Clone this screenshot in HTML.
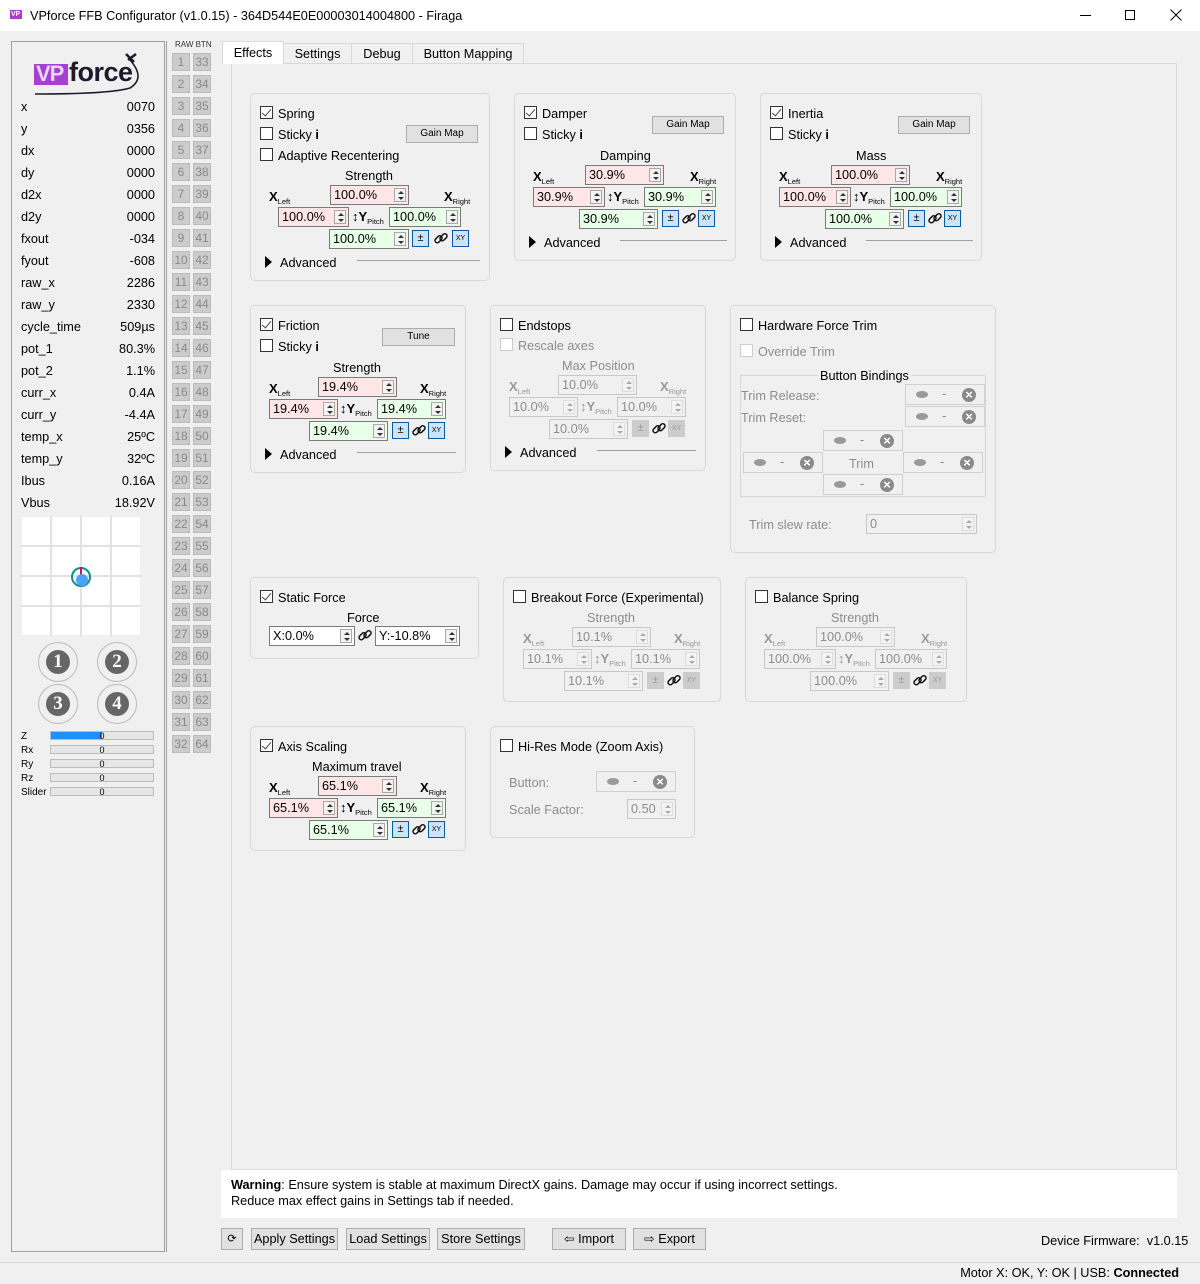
<!DOCTYPE html>
<html><head><meta charset="utf-8">
<style>
*{box-sizing:border-box;margin:0;padding:0}
body{width:1200px;height:1284px;background:#f0f0f0;font-family:"Liberation Sans",sans-serif;font-size:12.7px;color:#000;position:relative;overflow:hidden}
.a{position:absolute;white-space:nowrap}
.grp{position:absolute;border:1px solid #d8d8d8;border-radius:5px}
.cb{position:absolute;width:13px;height:13px;border:1px solid #333;background:#fff}
.cb.on::after{content:"";position:absolute;left:3px;top:0px;width:4px;height:8px;border:solid #444;border-width:0 1.5px 1.5px 0;transform:rotate(40deg)}
.cb.d{border-color:#ccc}
.t{position:absolute;white-space:nowrap;line-height:14px;margin-top:1px}
.dim{color:#8d8d8d}
.sp{position:absolute;height:20px;border:1px solid #7a7a7a;background:#fff;padding:2px 0 0 3px;font-size:12.7px;line-height:15px}
.pk{background:#ffe6e6}.gr{background:#e8ffe8}
.sp i{position:absolute;right:2px;top:2px;width:12px;height:14px;border:1px solid #a8a8a8;background:#f3f3f3}
.sp i::before{content:"";position:absolute;left:3px;top:2px;border:3px solid transparent;border-bottom:3px solid #333;border-top:0}
.sp i::after{content:"";position:absolute;left:3px;top:8px;border:3px solid transparent;border-top:3px solid #333;border-bottom:0}
.ds .sp{border-color:#c8c8c8;background:#f0f0f0;color:#8d8d8d}
.ds .sp i{border-color:#ddd}
.ds .sp i::before{border-bottom-color:#aaa}.ds .sp i::after{border-top-color:#aaa}
.xl{position:absolute;font-weight:bold;font-size:13px;line-height:14px}
.xl sub{font-size:7.5px;font-weight:normal;vertical-align:-3px}
.ds .xl{color:#999}
.bb{position:absolute;width:17px;height:17px;border:1px solid #0a59a3;background:#cce4f7;text-align:center;font-size:11px;line-height:15px}
.bx{font-size:7px}
.ds .bb{background:#ccc;border-color:#ccc;color:#999}
.lk{position:absolute;width:16px;height:16px}
.btn{position:absolute;border:1px solid #adadad;background:#e1e1e1;text-align:center;line-height:16px;font-size:12.7px}
.gm{font-size:10px;height:18px;line-height:16px}
.tri{position:absolute;border-left:7px solid #000;border-top:6px solid transparent;border-bottom:6px solid transparent;margin-top:1px}
.hl{position:absolute;height:1px;background:#a0a0a0}
.nb{position:absolute;width:18px;height:18px;background:#ccc;border:1px solid #bbb;color:#8a8a8a;text-align:center;font-size:12px;line-height:16px}
.row{position:absolute;left:21px;width:134px;height:16px;line-height:16px;margin-top:1px}
.row b{font-weight:normal;position:absolute;right:0}
.bind{position:absolute;width:80px;height:21px;border:1px solid #d0d0d0;background:#f0f0f0}
.bind::before{content:"";position:absolute;left:10px;top:6px;width:12px;height:7px;border-radius:50%;background:#9a9a9a}
.bind span{position:absolute;left:36px;top:2px;color:#888}
.bind::after{content:"×";position:absolute;right:8px;top:3px;width:14px;height:14px;border-radius:50%;background:#8a8a8a;color:#fff;font-weight:bold;font-size:13px;line-height:13px;text-align:center}
.num{position:absolute;width:40px;height:40px;border-radius:50%;border:1px solid #bbb}
.num div{position:absolute;left:7px;top:7px;width:24px;height:24px;border-radius:50%;background:#666;color:#fff;font-weight:bold;font-family:"Liberation Serif",serif;font-size:19px;text-align:center;line-height:24px}
.bar{position:absolute;left:50px;width:104px;height:9px;border:1px solid #bcbcbc;background:#e6e6e6;font-size:9px;line-height:8px;text-align:center}
.bl{position:absolute;left:21px;font-size:10px;line-height:10px;margin-top:1px}
.tab{position:absolute;top:43px;height:21px;border:1px solid #d9d9d9;background:#f0f0f0;text-align:center;line-height:20px}
</style></head><body>
<svg width="0" height="0" style="position:absolute"><defs><g id="lnk"><rect x="1.5" y="6" width="8" height="4.5" rx="2.2" transform="rotate(-45 5.5 8.2)" fill="none" stroke="#111" stroke-width="1.5"/><rect x="6.5" y="4" width="8" height="4.5" rx="2.2" transform="rotate(-45 10.5 6.2)" fill="none" stroke="#111" stroke-width="1.5"/></g></defs></svg>

<!-- title bar -->
<div class="a" style="left:0;top:0;width:1200px;height:31px;background:#fff"></div>
<div class="a" style="left:10px;top:10px;width:12px;height:9px;background:#a93ad6"></div>
<div class="a" style="left:11px;top:10px;font-size:7px;color:#fff;font-weight:bold;line-height:9px">VP</div>
<div class="a" style="left:30px;top:9px;font-size:12.7px">VPforce FFB Configurator (v1.0.15) - 364D544E0E00003014004800 - Firaga</div>
<div class="a" style="left:1080px;top:15px;width:11px;height:1px;background:#000"></div>
<div class="a" style="left:1125px;top:10px;width:10px;height:10px;border:1px solid #000"></div>
<svg class="a" style="left:1170px;top:9px" width="12" height="12"><path d="M0.5 0.5L11.5 11.5M11.5 0.5L0.5 11.5" stroke="#000" stroke-width="1"/></svg>

<!-- left panel -->
<div class="a" style="left:11px;top:41px;width:154px;height:1211px;border:1px solid #a0a0a0"></div>
<div class="a" style="left:34px;top:64px;width:34px;height:21px;background:#a63fd4"></div>
<div class="a" style="left:36px;top:61px;font-size:22px;font-weight:bold;color:#ead6f6;letter-spacing:-1px;line-height:26px">VP</div>
<div class="a" style="left:69px;top:58px;font-size:27px;font-weight:bold;color:#1e1a2a;line-height:28px;letter-spacing:-0.5px">force</div>
<svg class="a" style="left:30px;top:48px" width="115" height="48"><path d="M100 12 Q116 30 100 40 Q80 46 5 46" stroke="#1e1a2a" stroke-width="1.6" fill="none"/><path d="M96 6 L104 14 M98 12 L106 6" stroke="#1e1a2a" stroke-width="2.5"/></svg>
<div class="row" style="top:98px">x<b>0070</b></div>
<div class="row" style="top:120px">y<b>0356</b></div>
<div class="row" style="top:142px">dx<b>0000</b></div>
<div class="row" style="top:164px">dy<b>0000</b></div>
<div class="row" style="top:186px">d2x<b>0000</b></div>
<div class="row" style="top:208px">d2y<b>0000</b></div>
<div class="row" style="top:230px">fxout<b>-034</b></div>
<div class="row" style="top:252px">fyout<b>-608</b></div>
<div class="row" style="top:274px">raw_x<b>2286</b></div>
<div class="row" style="top:296px">raw_y<b>2330</b></div>
<div class="row" style="top:318px">cycle_time<b>509µs</b></div>
<div class="row" style="top:340px">pot_1<b>80.3%</b></div>
<div class="row" style="top:362px">pot_2<b>1.1%</b></div>
<div class="row" style="top:384px">curr_x<b>0.4A</b></div>
<div class="row" style="top:406px">curr_y<b>-4.4A</b></div>
<div class="row" style="top:428px">temp_x<b>25ºC</b></div>
<div class="row" style="top:450px">temp_y<b>32ºC</b></div>
<div class="row" style="top:472px">Ibus<b>0.16A</b></div>
<div class="row" style="top:494px">Vbus<b>18.92V</b></div>
<svg class="a" style="left:21px;top:516px" width="120" height="120"><rect width="120" height="120" fill="#fff" stroke="#e2e2e2"/><path d="M30 0V120M60 0V120M90 0V120M0 30H120M0 60H120M0 90H120" stroke="#e2e2e2" stroke-width="2"/><circle cx="60" cy="61" r="9" fill="none" stroke="#0f8f86" stroke-width="2"/><path d="M60 51V60" stroke="#c2185b" stroke-width="2"/><circle cx="61" cy="64" r="6" fill="#4aa3ff"/></svg>
<div class="num" style="left:38px;top:642px"><div>1</div></div>
<div class="num" style="left:97px;top:642px"><div>2</div></div>
<div class="num" style="left:38px;top:684px"><div>3</div></div>
<div class="num" style="left:97px;top:684px"><div>4</div></div>
<div class="bl" style="top:731px">Z</div><div class="bar" style="top:731px;background:linear-gradient(90deg,#1e90ff 50%,#e6e6e6 50%)">0</div>
<div class="bl" style="top:745px">Rx</div><div class="bar" style="top:745px">0</div>
<div class="bl" style="top:759px">Ry</div><div class="bar" style="top:759px">0</div>
<div class="bl" style="top:773px">Rz</div><div class="bar" style="top:773px">0</div>
<div class="bl" style="top:787px">Slider</div><div class="bar" style="top:787px">0</div>

<!-- button column -->
<div class="a" style="left:175px;top:40px;font-size:8px;color:#333">RAW BTN</div>
<div class="a" style="left:166px;top:41px;width:1px;height:1211px;background:#a0a0a0"></div>
<div class="nb" style="left:172px;top:53px">1</div><div class="nb" style="left:193px;top:53px">33</div>
<div class="nb" style="left:172px;top:75px">2</div><div class="nb" style="left:193px;top:75px">34</div>
<div class="nb" style="left:172px;top:97px">3</div><div class="nb" style="left:193px;top:97px">35</div>
<div class="nb" style="left:172px;top:119px">4</div><div class="nb" style="left:193px;top:119px">36</div>
<div class="nb" style="left:172px;top:141px">5</div><div class="nb" style="left:193px;top:141px">37</div>
<div class="nb" style="left:172px;top:163px">6</div><div class="nb" style="left:193px;top:163px">38</div>
<div class="nb" style="left:172px;top:185px">7</div><div class="nb" style="left:193px;top:185px">39</div>
<div class="nb" style="left:172px;top:207px">8</div><div class="nb" style="left:193px;top:207px">40</div>
<div class="nb" style="left:172px;top:229px">9</div><div class="nb" style="left:193px;top:229px">41</div>
<div class="nb" style="left:172px;top:251px">10</div><div class="nb" style="left:193px;top:251px">42</div>
<div class="nb" style="left:172px;top:273px">11</div><div class="nb" style="left:193px;top:273px">43</div>
<div class="nb" style="left:172px;top:295px">12</div><div class="nb" style="left:193px;top:295px">44</div>
<div class="nb" style="left:172px;top:317px">13</div><div class="nb" style="left:193px;top:317px">45</div>
<div class="nb" style="left:172px;top:339px">14</div><div class="nb" style="left:193px;top:339px">46</div>
<div class="nb" style="left:172px;top:361px">15</div><div class="nb" style="left:193px;top:361px">47</div>
<div class="nb" style="left:172px;top:383px">16</div><div class="nb" style="left:193px;top:383px">48</div>
<div class="nb" style="left:172px;top:405px">17</div><div class="nb" style="left:193px;top:405px">49</div>
<div class="nb" style="left:172px;top:427px">18</div><div class="nb" style="left:193px;top:427px">50</div>
<div class="nb" style="left:172px;top:449px">19</div><div class="nb" style="left:193px;top:449px">51</div>
<div class="nb" style="left:172px;top:471px">20</div><div class="nb" style="left:193px;top:471px">52</div>
<div class="nb" style="left:172px;top:493px">21</div><div class="nb" style="left:193px;top:493px">53</div>
<div class="nb" style="left:172px;top:515px">22</div><div class="nb" style="left:193px;top:515px">54</div>
<div class="nb" style="left:172px;top:537px">23</div><div class="nb" style="left:193px;top:537px">55</div>
<div class="nb" style="left:172px;top:559px">24</div><div class="nb" style="left:193px;top:559px">56</div>
<div class="nb" style="left:172px;top:581px">25</div><div class="nb" style="left:193px;top:581px">57</div>
<div class="nb" style="left:172px;top:603px">26</div><div class="nb" style="left:193px;top:603px">58</div>
<div class="nb" style="left:172px;top:625px">27</div><div class="nb" style="left:193px;top:625px">59</div>
<div class="nb" style="left:172px;top:647px">28</div><div class="nb" style="left:193px;top:647px">60</div>
<div class="nb" style="left:172px;top:669px">29</div><div class="nb" style="left:193px;top:669px">61</div>
<div class="nb" style="left:172px;top:691px">30</div><div class="nb" style="left:193px;top:691px">62</div>
<div class="nb" style="left:172px;top:713px">31</div><div class="nb" style="left:193px;top:713px">63</div>
<div class="nb" style="left:172px;top:735px">32</div><div class="nb" style="left:193px;top:735px">64</div>

<!-- tabs & pane -->
<div class="a" style="left:231px;top:63px;width:946px;height:1107px;border:1px solid #d9d9d9"></div>
<div class="tab" style="left:283px;width:69px">Settings</div>
<div class="tab" style="left:351px;width:62px">Debug</div>
<div class="tab" style="left:412px;width:112px">Button Mapping</div>
<div class="tab" style="left:222px;top:41px;width:62px;height:23px;border-bottom:none;background:#fff;line-height:22px">Effects</div>

<!-- Spring -->
<div class="grp" style="left:250px;top:93px;width:240px;height:188px"></div>
<div class="cb on" style="left:260px;top:106px"></div><div class="t" style="left:278px;top:106px">Spring</div>
<div class="cb" style="left:260px;top:127px"></div><div class="t" style="left:278px;top:127px">Sticky <b>i</b></div>
<div class="cb" style="left:260px;top:148px"></div><div class="t" style="left:278px;top:148px">Adaptive Recentering</div>
<div class="btn gm" style="left:406px;top:125px;width:72px">Gain Map</div>
<div class="t" style="left:345px;top:168px">Strength</div>
<div class="xl" style="left:269px;top:190px">X<sub>Left</sub></div><div class="xl" style="left:444px;top:190px">X<sub>Right</sub></div>
<div class="sp pk" style="left:330px;top:185px;width:79px">100.0%<i></i></div>
<div class="sp pk" style="left:278px;top:207px;width:71px">100.0%<i></i></div>
<div class="xl" style="left:352px;top:210px">↕Y<sub>Pitch</sub></div>
<div class="sp gr" style="left:389px;top:207px;width:72px">100.0%<i></i></div>
<div class="sp gr" style="left:329px;top:229px;width:80px">100.0%<i></i></div>
<div class="bb" style="left:412px;top:230px">±</div><svg class="lk" style="left:433px;top:231px"><use href="#lnk"/></svg><div class="bb bx" style="left:452px;top:230px">XY</div>
<div class="tri" style="left:265px;top:255px"></div><div class="t" style="left:280px;top:255px">Advanced</div><div class="hl" style="left:357px;top:260px;width:123px"></div>

<!-- Damper -->
<div class="grp" style="left:514px;top:93px;width:222px;height:168px"></div>
<div class="cb on" style="left:524px;top:106px"></div><div class="t" style="left:542px;top:106px">Damper</div>
<div class="cb" style="left:524px;top:127px"></div><div class="t" style="left:542px;top:127px">Sticky <b>i</b></div>
<div class="btn gm" style="left:652px;top:116px;width:72px">Gain Map</div>
<div class="t" style="left:600px;top:148px">Damping</div>
<div class="xl" style="left:533px;top:170px">X<sub>Left</sub></div><div class="xl" style="left:690px;top:170px">X<sub>Right</sub></div>
<div class="sp pk" style="left:585px;top:165px;width:79px">30.9%<i></i></div>
<div class="sp pk" style="left:533px;top:187px;width:72px">30.9%<i></i></div>
<div class="xl" style="left:607px;top:190px">↕Y<sub>Pitch</sub></div>
<div class="sp gr" style="left:644px;top:187px;width:72px">30.9%<i></i></div>
<div class="sp gr" style="left:579px;top:209px;width:79px">30.9%<i></i></div>
<div class="bb" style="left:662px;top:210px">±</div><svg class="lk" style="left:681px;top:211px"><use href="#lnk"/></svg><div class="bb bx" style="left:698px;top:210px">XY</div>
<div class="tri" style="left:529px;top:235px"></div><div class="t" style="left:544px;top:235px">Advanced</div><div class="hl" style="left:620px;top:240px;width:107px"></div>

<!-- Inertia -->
<div class="grp" style="left:760px;top:93px;width:222px;height:168px"></div>
<div class="cb on" style="left:770px;top:106px"></div><div class="t" style="left:788px;top:106px">Inertia</div>
<div class="cb" style="left:770px;top:127px"></div><div class="t" style="left:788px;top:127px">Sticky <b>i</b></div>
<div class="btn gm" style="left:898px;top:116px;width:72px">Gain Map</div>
<div class="t" style="left:856px;top:148px">Mass</div>
<div class="xl" style="left:779px;top:170px">X<sub>Left</sub></div><div class="xl" style="left:936px;top:170px">X<sub>Right</sub></div>
<div class="sp pk" style="left:831px;top:165px;width:79px">100.0%<i></i></div>
<div class="sp pk" style="left:779px;top:187px;width:72px">100.0%<i></i></div>
<div class="xl" style="left:853px;top:190px">↕Y<sub>Pitch</sub></div>
<div class="sp gr" style="left:890px;top:187px;width:72px">100.0%<i></i></div>
<div class="sp gr" style="left:825px;top:209px;width:79px">100.0%<i></i></div>
<div class="bb" style="left:908px;top:210px">±</div><svg class="lk" style="left:927px;top:211px"><use href="#lnk"/></svg><div class="bb bx" style="left:944px;top:210px">XY</div>
<div class="tri" style="left:775px;top:235px"></div><div class="t" style="left:790px;top:235px">Advanced</div><div class="hl" style="left:866px;top:240px;width:107px"></div>

<!-- Friction -->
<div class="grp" style="left:250px;top:305px;width:216px;height:168px"></div>
<div class="cb on" style="left:260px;top:318px"></div><div class="t" style="left:278px;top:318px">Friction</div>
<div class="cb" style="left:260px;top:339px"></div><div class="t" style="left:278px;top:339px">Sticky <b>i</b></div>
<div class="btn gm" style="left:382px;top:328px;width:73px">Tune</div>
<div class="t" style="left:333px;top:360px">Strength</div>
<div class="xl" style="left:269px;top:382px">X<sub>Left</sub></div><div class="xl" style="left:420px;top:382px">X<sub>Right</sub></div>
<div class="sp pk" style="left:318px;top:377px;width:79px">19.4%<i></i></div>
<div class="sp pk" style="left:269px;top:399px;width:69px">19.4%<i></i></div>
<div class="xl" style="left:340px;top:402px">↕Y<sub>Pitch</sub></div>
<div class="sp gr" style="left:377px;top:399px;width:69px">19.4%<i></i></div>
<div class="sp gr" style="left:309px;top:421px;width:79px">19.4%<i></i></div>
<div class="bb" style="left:392px;top:422px">±</div><svg class="lk" style="left:411px;top:423px"><use href="#lnk"/></svg><div class="bb bx" style="left:428px;top:422px">XY</div>
<div class="tri" style="left:265px;top:447px"></div><div class="t" style="left:280px;top:447px">Advanced</div><div class="hl" style="left:357px;top:452px;width:99px"></div>

<!-- Endstops -->
<div class="grp" style="left:490px;top:305px;width:216px;height:166px"></div>
<div class="cb" style="left:500px;top:318px"></div><div class="t" style="left:518px;top:318px">Endstops</div>
<div class="cb d" style="left:500px;top:338px"></div><div class="t dim" style="left:518px;top:338px">Rescale axes</div>
<div class="ds">
<div class="t dim" style="left:562px;top:358px">Max Position</div>
<div class="xl" style="left:509px;top:380px">X<sub>Left</sub></div><div class="xl" style="left:660px;top:380px">X<sub>Right</sub></div>
<div class="sp" style="left:558px;top:375px;width:79px">10.0%<i></i></div>
<div class="sp" style="left:509px;top:397px;width:69px">10.0%<i></i></div>
<div class="xl" style="left:580px;top:400px">↕Y<sub>Pitch</sub></div>
<div class="sp" style="left:617px;top:397px;width:69px">10.0%<i></i></div>
<div class="sp" style="left:549px;top:419px;width:79px">10.0%<i></i></div>
<div class="bb" style="left:632px;top:420px">±</div><svg class="lk" style="left:651px;top:421px"><use href="#lnk"/></svg><div class="bb bx" style="left:668px;top:420px">XY</div>
</div>
<div class="tri" style="left:505px;top:445px"></div><div class="t" style="left:520px;top:445px">Advanced</div><div class="hl" style="left:597px;top:450px;width:99px"></div>

<!-- HW Trim -->
<div class="grp" style="left:730px;top:305px;width:266px;height:248px"></div>
<div class="cb" style="left:740px;top:318px"></div><div class="t" style="left:758px;top:318px">Hardware Force Trim</div>
<div class="cb d" style="left:740px;top:344px"></div><div class="t dim" style="left:758px;top:344px">Override Trim</div>
<div class="a" style="left:740px;top:375px;width:246px;height:122px;border:1px solid #d8d8d8"></div>
<div class="t" style="left:818px;top:368px;background:#f0f0f0;padding:0 2px">Button Bindings</div>
<div class="t dim" style="left:741px;top:388px">Trim Release:</div>
<div class="t dim" style="left:741px;top:410px">Trim Reset:</div>
<div class="bind" style="left:905px;top:384px"><span>-</span></div>
<div class="bind" style="left:905px;top:406px"><span>-</span></div>
<div class="bind" style="left:823px;top:430px"><span>-</span></div>
<div class="bind" style="left:743px;top:452px"><span>-</span></div>
<div class="bind" style="left:903px;top:452px"><span>-</span></div>
<div class="bind" style="left:823px;top:474px"><span>-</span></div>
<div class="t dim" style="left:849px;top:456px">Trim</div>
<div class="t dim" style="left:749px;top:517px">Trim slew rate:</div>
<div class="ds"><div class="sp" style="left:866px;top:514px;width:111px;height:20px">0<i></i></div></div>

<!-- Static Force -->
<div class="grp" style="left:250px;top:577px;width:229px;height:82px"></div>
<div class="cb on" style="left:260px;top:590px"></div><div class="t" style="left:278px;top:590px">Static Force</div>
<div class="t" style="left:347px;top:610px">Force</div>
<div class="sp" style="left:269px;top:626px;width:86px">X:0.0%<i></i></div>
<svg class="lk" style="left:357px;top:628px"><use href="#lnk"/></svg>
<div class="sp" style="left:375px;top:626px;width:85px">Y:-10.8%<i></i></div>

<!-- Breakout -->
<div class="grp" style="left:503px;top:577px;width:218px;height:125px"></div>
<div class="cb" style="left:513px;top:590px"></div><div class="t" style="left:531px;top:590px">Breakout Force (Experimental)</div>
<div class="ds">
<div class="t dim" style="left:587px;top:610px">Strength</div>
<div class="xl" style="left:523px;top:632px">X<sub>Left</sub></div><div class="xl" style="left:674px;top:632px">X<sub>Right</sub></div>
<div class="sp" style="left:572px;top:627px;width:79px">10.1%<i></i></div>
<div class="sp" style="left:523px;top:649px;width:69px">10.1%<i></i></div>
<div class="xl" style="left:594px;top:652px">↕Y<sub>Pitch</sub></div>
<div class="sp" style="left:631px;top:649px;width:69px">10.1%<i></i></div>
<div class="sp" style="left:564px;top:671px;width:79px">10.1%<i></i></div>
<div class="bb" style="left:647px;top:672px">±</div><svg class="lk" style="left:666px;top:673px"><use href="#lnk"/></svg><div class="bb bx" style="left:683px;top:672px">XY</div>
</div>

<!-- Balance -->
<div class="grp" style="left:745px;top:577px;width:222px;height:125px"></div>
<div class="cb" style="left:755px;top:590px"></div><div class="t" style="left:773px;top:590px">Balance Spring</div>
<div class="ds">
<div class="t dim" style="left:831px;top:610px">Strength</div>
<div class="xl" style="left:764px;top:632px">X<sub>Left</sub></div><div class="xl" style="left:921px;top:632px">X<sub>Right</sub></div>
<div class="sp" style="left:816px;top:627px;width:79px">100.0%<i></i></div>
<div class="sp" style="left:764px;top:649px;width:72px">100.0%<i></i></div>
<div class="xl" style="left:838px;top:652px">↕Y<sub>Pitch</sub></div>
<div class="sp" style="left:875px;top:649px;width:72px">100.0%<i></i></div>
<div class="sp" style="left:810px;top:671px;width:79px">100.0%<i></i></div>
<div class="bb" style="left:893px;top:672px">±</div><svg class="lk" style="left:912px;top:673px"><use href="#lnk"/></svg><div class="bb bx" style="left:929px;top:672px">XY</div>
</div>

<!-- Axis scaling -->
<div class="grp" style="left:250px;top:726px;width:216px;height:125px"></div>
<div class="cb on" style="left:260px;top:739px"></div><div class="t" style="left:278px;top:739px">Axis Scaling</div>
<div class="t" style="left:312px;top:759px">Maximum travel</div>
<div class="xl" style="left:269px;top:781px">X<sub>Left</sub></div><div class="xl" style="left:420px;top:781px">X<sub>Right</sub></div>
<div class="sp pk" style="left:318px;top:776px;width:79px">65.1%<i></i></div>
<div class="sp pk" style="left:269px;top:798px;width:69px">65.1%<i></i></div>
<div class="xl" style="left:340px;top:801px">↕Y<sub>Pitch</sub></div>
<div class="sp gr" style="left:377px;top:798px;width:69px">65.1%<i></i></div>
<div class="sp gr" style="left:309px;top:820px;width:79px">65.1%<i></i></div>
<div class="bb" style="left:392px;top:821px">±</div><svg class="lk" style="left:411px;top:822px"><use href="#lnk"/></svg><div class="bb bx" style="left:428px;top:821px">XY</div>

<!-- Hi-Res -->
<div class="grp" style="left:490px;top:726px;width:205px;height:112px"></div>
<div class="cb" style="left:500px;top:739px"></div><div class="t" style="left:518px;top:739px">Hi-Res Mode (Zoom Axis)</div>
<div class="t dim" style="left:509px;top:775px">Button:</div>
<div class="bind" style="left:596px;top:771px"><span>-</span></div>
<div class="t dim" style="left:509px;top:802px">Scale Factor:</div>
<div class="ds"><div class="sp" style="left:627px;top:799px;width:49px">0.50<i></i></div></div>

<!-- warning -->
<div class="a" style="left:221px;top:1170px;width:956px;height:48px;background:#fff"></div>
<div class="a" style="left:231px;top:1177px;line-height:16px"><b>Warning</b>: Ensure system is stable at maximum DirectX gains. Damage may occur if using incorrect settings.<br>Reduce max effect gains in Settings tab if needed.</div>

<!-- bottom buttons -->
<div class="btn" style="left:221px;top:1228px;width:22px;height:22px;font-size:11px;line-height:20px">⟳</div>
<div class="btn" style="left:251px;top:1228px;width:87px;height:22px;line-height:21px">Apply Settings</div>
<div class="btn" style="left:346px;top:1228px;width:84px;height:22px;line-height:21px">Load Settings</div>
<div class="btn" style="left:437px;top:1228px;width:88px;height:22px;line-height:21px">Store Settings</div>
<div class="btn" style="left:552px;top:1228px;width:74px;height:22px;line-height:21px">⇦ Import</div>
<div class="btn" style="left:633px;top:1228px;width:73px;height:22px;line-height:21px">⇨ Export</div>
<div class="a" style="left:1041px;top:1234px">Device Firmware:&nbsp; v1.0.15</div>
<div class="a" style="left:0;top:1262px;width:1200px;height:1px;background:#d6d6d6"></div>
<div class="a" style="right:21px;top:1266px">Motor X: OK, Y: OK | USB: <b>Connected</b></div>
</body></html>
